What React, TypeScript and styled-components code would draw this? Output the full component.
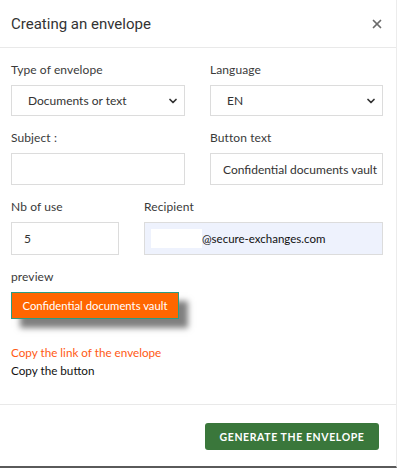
import { FC } from 'react';
import styled, { createGlobalStyle } from 'styled-components';
import { ChevronDown, X } from 'lucide-react';

const GlobalStyle = createGlobalStyle`
  html, body {
    margin: 0;
    padding: 0;
    background: #fff;
  }
  * {
    box-sizing: border-box;
  }
`;

const Modal = styled.div`
  width: 397px;
  height: 468px;
  background: #fff;
  display: flex;
  flex-direction: column;
  border-bottom: 2px solid #5a5a5a;
  border-right: 1px solid #ececec;
  font-family: Lato, 'Noto Sans', sans-serif;
  color: #333;
`;

const Header = styled.div`
  height: 48px;
  flex: none;
  display: flex;
  align-items: center;
  justify-content: space-between;
  padding: 0 12px 0 11px;
  border-bottom: 1px solid #e9e9e9;
`;

const Title = styled.h4`
  margin: 0;
  font-family: Roboto, 'Liberation Sans', sans-serif;
  font-weight: 400;
  font-size: 15px;
  color: #333;
`;

const Close = styled.button`
  border: 0;
  background: none;
  padding: 0;
  display: flex;
  color: #6b6b6b;
`;

const Body = styled.div`
  flex: 1;
  padding: 14px 14px 0 11px;
  display: flex;
  flex-direction: column;
`;

const Row = styled.div<{ $cols: string }>`
  display: grid;
  grid-template-columns: ${({ $cols }) => $cols};
  column-gap: 25px;
  margin-bottom: 14px;
`;

const Field = styled.div`
  display: flex;
  flex-direction: column;
`;

const Label = styled.label`
  font-size: 12px;
  line-height: 16px;
  letter-spacing: 0.1px;
  margin-bottom: 7px;
  color: #3a3a3a;
`;

const SelectBox = styled.div`
  height: 31px;
  border: 1px solid #dcdcdc;
  display: flex;
  align-items: center;
  justify-content: space-between;
  padding: 0 5px 0 16px;
  font-size: 12px;
  color: #333;
`;

const Input = styled.div<{ $h?: number }>`
  height: ${({ $h }) => $h ?? 32}px;
  border: 1px solid #dcdcdc;
  display: flex;
  align-items: center;
  padding: 0 12px;
  font-size: 12px;
  color: #333;
  white-space: nowrap;
  overflow: hidden;
`;

const RecipientBox = styled(Input)`
  background: #eef2fd;
  padding: 0 6px;
  color: #111;
  font-size: 11.5px;
`;

const Masked = styled.span`
  width: 51px;
  height: 19px;
  background: #fff;
  flex: none;
`;

const PreviewButton = styled.div`
  align-self: flex-start;
  width: 168px;
  height: 27px;
  background: #ff6600;
  border: 1px solid #2a9d84;
  color: #fff;
  font-size: 11.3px;
  display: flex;
  align-items: center;
  justify-content: center;
  box-shadow: 9px 9px 6px rgba(0, 0, 0, 0.5);
  margin-bottom: 24px;
`;

const LinkText = styled.div<{ $accent?: boolean }>`
  font-size: 11.7px;
  line-height: 18px;
  color: ${({ $accent }) => ($accent ? '#ff5a14' : '#111')};
`;

const Footer = styled.div`
  height: 62px;
  flex: none;
  border-top: 1px solid #e9e9e9;
  display: flex;
  justify-content: flex-end;
  align-items: flex-start;
  padding: 18px 17px 0 0;
`;

const Generate = styled.button`
  width: 174px;
  height: 27px;
  border: 0;
  border-radius: 3px;
  background: #3a773b;
  color: #fff;
  font-family: Lato, 'Noto Sans', sans-serif;
  font-size: 10.5px;
  font-weight: 700;
  letter-spacing: 0.6px;
  text-transform: uppercase;
`;

const App: FC = () => (
  <>
    <GlobalStyle />
    <Modal>
      <Header>
        <Title>Creating an envelope</Title>
        <Close aria-label="close">
          <X size={14} strokeWidth={3} />
        </Close>
      </Header>
      <Body>
        <Row $cols="174px 173px">
          <Field>
            <Label>Type of envelope</Label>
            <SelectBox>
              Documents or text
              <ChevronDown size={12} strokeWidth={3.5} />
            </SelectBox>
          </Field>
          <Field>
            <Label>Language</Label>
            <SelectBox>
              EN
              <ChevronDown size={12} strokeWidth={3.5} />
            </SelectBox>
          </Field>
        </Row>
        <Row $cols="174px 173px">
          <Field>
            <Label>Subject :</Label>
            <Input />
          </Field>
          <Field>
            <Label>Button text</Label>
            <Input>Confidential documents vault</Input>
          </Field>
        </Row>
        <Row $cols="108px 239px">
          <Field>
            <Label>Nb of use</Label>
            <Input $h={33}>5</Input>
          </Field>
          <Field>
            <Label>Recipient</Label>
            <RecipientBox $h={33}>
              <Masked />
              @secure-exchanges.com
            </RecipientBox>
          </Field>
        </Row>
        <Label>preview</Label>
        <PreviewButton>Confidential documents vault</PreviewButton>
        <LinkText $accent>Copy the link of the envelope</LinkText>
        <LinkText>Copy the button</LinkText>
      </Body>
      <Footer>
        <Generate>Generate the envelope</Generate>
      </Footer>
    </Modal>
  </>
);

export default App;
